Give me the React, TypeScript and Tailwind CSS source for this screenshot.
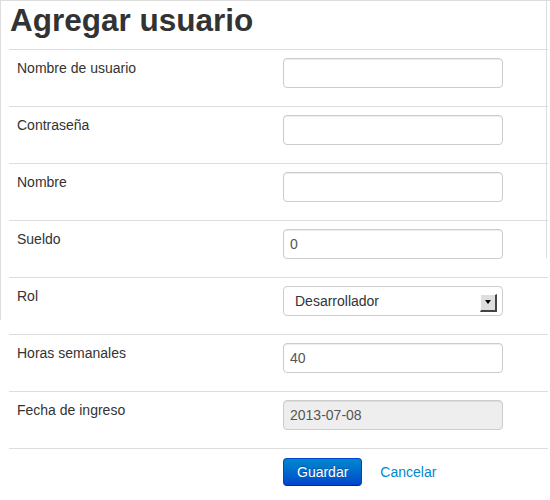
const fields: { label: string; value?: string; kind: 'text' | 'select' | 'disabled' }[] = [
  { label: 'Nombre de usuario', kind: 'text' },
  { label: 'Contraseña', kind: 'text' },
  { label: 'Nombre', kind: 'text' },
  { label: 'Sueldo', value: '0', kind: 'text' },
  { label: 'Rol', value: 'Desarrollador', kind: 'select' },
  { label: 'Horas semanales', value: '40', kind: 'text' },
  { label: 'Fecha de ingreso', value: '2013-07-08', kind: 'disabled' },
];

function Field({ value, kind }: { value?: string; kind: string }) {
  if (kind === 'select') {
    return (
      <div className="flex h-[30px] w-[220px] items-center justify-between rounded-[4px] border border-[#ccc] bg-white pl-[11px] pr-[5px] text-[#333]">
        <span>{value}</span>
        {/* old style native dropdown button */}
        <div className="mt-[3px] flex h-[18px] w-[17px] items-start justify-center border-b-2 border-r-2 border-t border-l border-b-[#444] border-r-[#444] border-t-white border-l-white bg-[#dedede] pt-[5px]">
          <div className="h-0 w-0 border-l-[3px] border-r-[3px] border-t-[4px] border-l-transparent border-r-transparent border-t-black" />
        </div>
      </div>
    );
  }
  return (
    <div
      className={
        'flex h-[30px] w-[220px] items-center rounded-[4px] border border-[#ccc] px-[6px] text-[#555] shadow-[inset_0_1px_1px_rgba(0,0,0,0.075)] ' +
        (kind === 'disabled' ? 'bg-[#eee]' : 'bg-white')
      }
    >
      {value}
    </div>
  );
}

export default function App() {
  return (
    <div className="relative h-[500px] w-[550px] overflow-hidden bg-white font-['Liberation_Sans',Arial,sans-serif] text-[14px] leading-[20px] text-[#333]">
      {/* frame edges */}
      <div className="absolute left-0 top-0 h-px w-full bg-[#ddd]" />
      <div className="absolute left-0 top-0 h-[320px] w-px bg-[#ddd]" />
      <div className="absolute left-[546px] top-0 h-[258px] w-px bg-[#ddd]" />

      <h2 className="pl-[10px] text-[31.5px] font-bold leading-[40px] text-[#333]">Agregar usuario</h2>

      <div className="ml-[9px] mt-[9px] w-[539px]">
        {fields.map((f) => (
          <div key={f.label} className="flex h-[57px] border-t border-[#ddd]">
            <div className="w-[266px] p-[8px]">{f.label}</div>
            <div className="p-[8px]">
              <Field value={f.value} kind={f.kind} />
            </div>
          </div>
        ))}
        <div className="flex border-t border-[#ddd]">
          <div className="w-[266px]" />
          <div className="flex items-center px-[8px] pt-[9px]">
            <button className="h-[28px] rounded-[4px] border border-[#0044cc] border-b-[#002a80] bg-gradient-to-b from-[#0088cc] to-[#0044cc] px-[13px] text-[14px] leading-[20px] text-white [text-shadow:0_-1px_0_rgba(0,0,0,0.25)]">
              Guardar
            </button>
            <a className="ml-[18px] text-[#0088cc]" href="#">
              Cancelar
            </a>
          </div>
        </div>
      </div>
    </div>
  );
}
